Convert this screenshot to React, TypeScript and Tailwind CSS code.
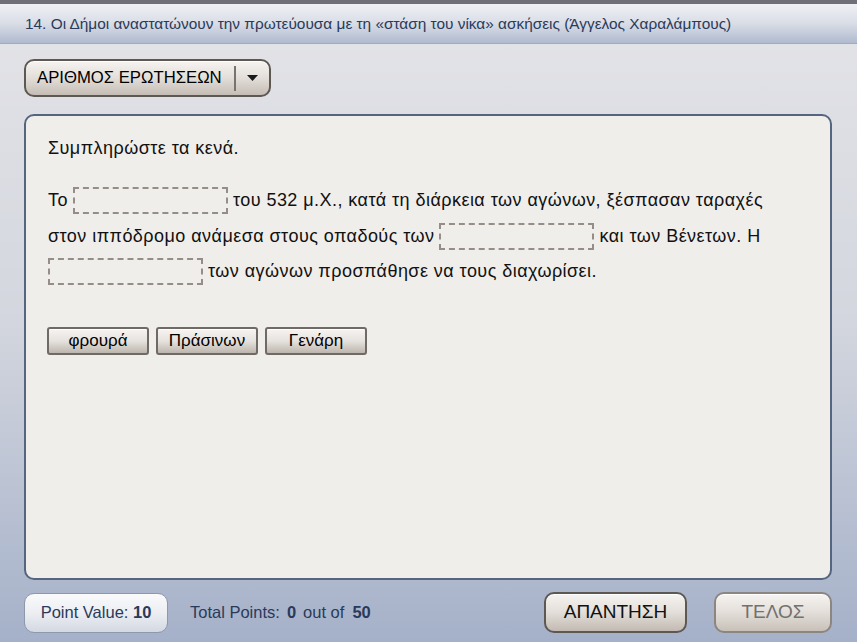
import React from "react";

const Blank = () => (
  <span className="inline-block w-[155px] h-[27px] border-2 border-dashed border-[#958e88] align-middle" />
);

const WordBtn = ({ label }: { label: string }) => (
  <button className="w-[102px] h-[28px] rounded-[3px] border-2 border-[#706a66] bg-linear-to-b from-[#f6f4f1] via-[#e6e2de] to-[#bdb6ae] text-[17px] text-black flex items-center justify-center shadow-[inset_0_1px_0_#ffffff]">
    {label}
  </button>
);

export default function App() {
  return (
    <div
      className="w-[857px] h-[642px] flex flex-col overflow-hidden border-t-[4px] border-[#6f6f77] bg-linear-to-b from-[#e4e4e8] via-[#d3d6de] to-[#a5b1c9]"
      style={{ fontFamily: '"Liberation Sans", Arial, sans-serif' }}
    >
      <div className="h-[40px] shrink-0 flex items-center pl-[25px] bg-linear-to-b from-[#eef0f4] via-[#d9dde6] to-[#b0bbd0] border-b border-[#a3abbb] text-[15.4px] text-[#2a3a5a]">
        14. Οι Δήμοι αναστατώνουν την πρωτεύουσα με τη «στάση του νίκα» ασκήσεις (Άγγελος Χαραλάμπους)
      </div>

      <div className="flex-1 flex flex-col pl-[24px] pr-[25px]">
        <div className="mt-[15px] w-[247px] h-[38px] rounded-[10px] border-2 border-[#5e5853] bg-linear-to-b from-[#f6f4f1] via-[#e3ded9] to-[#c5bdb5] flex items-center shadow-[inset_0_1px_0_#ffffff]">
          <span className="pl-[11px] text-[16.7px] text-black w-[208px]">ΑΡΙΘΜΟΣ ΕΡΩΤΗΣΕΩΝ</span>
          <span className="w-[2px] h-[25px] bg-[#7a726c]" />
          <span className="flex-1 flex justify-center">
            <svg width="11" height="6" viewBox="0 0 11 6">
              <polygon points="0,0 11,0 5.5,6" fill="#1a1a1a" />
            </svg>
          </span>
        </div>

        <div className="mt-[17px] h-[466px] rounded-[10px] border-2 border-[#56657f] bg-[#f0eeeb] pl-[22px] pt-[19px] text-[18px] tracking-[0.45px] text-[#111]">
          <div className="h-[26px] leading-[26px]">Συμπληρώστε τα κενά.</div>
          <div className="mt-[21px] flex flex-col">
            <div className="h-[36px] flex items-center gap-[5px]">
              <span>Το</span>
              <Blank />
              <span>του 532 μ.Χ., κατά τη διάρκεια των αγώνων, ξέσπασαν ταραχές</span>
            </div>
            <div className="h-[36px] flex items-center gap-[5px]">
              <span>στον ιππόδρομο ανάμεσα στους οπαδούς των</span>
              <Blank />
              <span>και των Βένετων. Η</span>
            </div>
            <div className="h-[35px] flex items-center gap-[5px]">
              <Blank />
              <span>των αγώνων προσπάθησε να τους διαχωρίσει.</span>
            </div>
          </div>
          <div className="mt-[38px] -ml-[1px] flex gap-[7px] tracking-normal">
            <WordBtn label="φρουρά" />
            <WordBtn label="Πράσινων" />
            <WordBtn label="Γενάρη" />
          </div>
        </div>

        <div className="mt-[12px] flex items-center">
          <div className="w-[144px] h-[40px] rounded-[10px] border border-[#8e98ab] bg-linear-to-b from-[#fafafb] via-[#eceef2] to-[#d3d8e2] flex items-center justify-center text-[16.5px] text-[#2a3a5a]">
            Point Value:&nbsp;<b>10</b>
          </div>
          <div className="ml-[22px] flex items-center text-[16.5px] text-[#2a3a5a]">
            <span>Total Points:</span>
            <b className="ml-[7px]">0</b>
            <span className="ml-[7px]">out of</span>
            <b className="ml-[8px]">50</b>
          </div>
          <div className="flex-1" />
          <button className="w-[143px] h-[41px] rounded-[10px] border-2 border-[#5e5853] bg-linear-to-b from-[#f6f4f1] via-[#e3ded9] to-[#c2bab2] text-[19px] text-[#111] flex items-center justify-center shadow-[inset_0_1px_0_#ffffff]">
            ΑΠΑΝΤΗΣΗ
          </button>
          <button className="ml-[27px] w-[118px] h-[41px] rounded-[10px] border-2 border-[#8c8580] bg-linear-to-b from-[#f6f4f1] via-[#e3ded9] to-[#c8c1b9] text-[19px] text-[#737070] flex items-center justify-center shadow-[inset_0_1px_0_#ffffff]">
            ΤΕΛΟΣ
          </button>
        </div>
      </div>
    </div>
  );
}
